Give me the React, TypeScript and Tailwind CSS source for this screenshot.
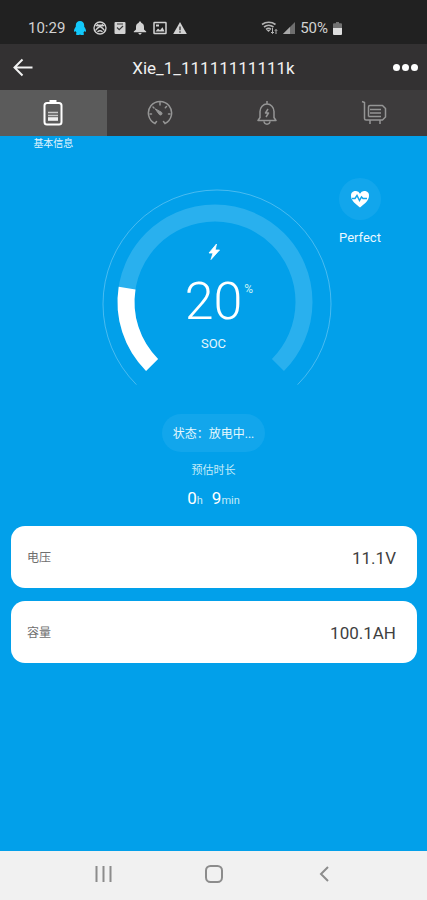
import React from "react";

const FONT = "font-[Roboto,'Noto_Sans_CJK_SC',sans-serif]";

function StatusBar() {
  return (
    <div className="flex h-11 items-end justify-between bg-[#212121] pr-[85px] pb-2 pl-7 text-[#d2d2d2]">
      <div className="flex h-4 items-center gap-[6px]">
        <span className="pr-[2px] text-[15px] leading-4">10:29</span>
        <svg className="h-4 w-[14px]" viewBox="0 0 13 16" fill="#12c8fa">
          <path d="M6.500 1C4 1 2.300 2.800 2.300 5.200v1.600C1.200 8.200.4 9.800.5 11.200c.2 1 1 .6 1.500-.2.2.9.8 1.500 1.400 2-.8.3-1.100.9-.8 1.400.5.7 2.900.7 3.900 0 1 .7 3.400.7 3.900 0 .3-.5 0-1.100-.8-1.400.6-.5 1.200-1.100 1.400-2 .5.8 1.300 1.200 1.500.2.100-1.400-.7-3-1.800-4.400V5.200C10.700 2.800 9 1 6.500 1z" />
        </svg>
        <svg className="size-[14px]" viewBox="0 0 14 14" fill="none" stroke="currentColor" strokeWidth="1.300">
          <circle cx="7" cy="7" r="6" />
          <path d="M2.500 4.500c3 0 7 2 9 5M11.500 4.500c-3 0-7 2-9 5M4 3.500c2 1 4 1 6 0M4.500 11c1.500-1.500 3.500-1.500 5 0" />
        </svg>
        <svg className="size-[14px]" viewBox="0 0 14 14">
          <rect x="1.500" y="1" width="11" height="12" rx="1" fill="currentColor" />
          <path d="M4 6.500l2.200 2.200L10 5M4 3h6" fill="none" stroke="#3a3a3a" strokeWidth="1.200" />
        </svg>
        <svg className="size-[14px]" viewBox="0 0 14 14" fill="currentColor">
          <path d="M7 .5c-.8 0-1.200.5-1.200 1.200C3.900 2.300 3 3.900 3 6v2.500L.8 10.500v.8h12.400v-.8L11 8.500V6c0-2.100-.9-3.700-2.800-4.300C8.200 1 7.800.5 7 .5zM5.400 12.100h3.200c0 .9-.7 1.500-1.600 1.500s-1.600-.6-1.600-1.500z" />
        </svg>
        <svg className="size-[14px]" viewBox="0 0 14 14" fill="none" stroke="currentColor" strokeWidth="1.500">
          <rect x="1" y="1.500" width="12" height="11" rx="0.500" />
          <path d="M2.500 10.500l2.500-3 2 1.800 2.500-3 2 4.200z" fill="currentColor" stroke="none" />
          <rect x="3" y="3.500" width="3" height="2" fill="currentColor" stroke="none" />
        </svg>
        <svg className="size-[14px]" viewBox="0 0 14 14">
          <path d="M7 1l6.800 12H.2z" fill="currentColor" />
          <path d="M7 5.500v3.800M7 10.200v1.500" stroke="#212121" strokeWidth="1.200" />
        </svg>
      </div>
      <div className="flex h-4 items-center gap-[5px]">
        <svg className="h-[14px] w-[17px]" viewBox="0 0 17 14" fill="none" stroke="#b4b4b4" strokeWidth="1.600">
          <path d="M1 3.500c4-3 9.500-3 13.500 0M3 6c3-2.200 6.500-2.200 9.500 0M5 8.300c1.800-1.200 3.500-1.200 5 0" />
          <path d="M5.500 9h4L7.500 11z" fill="#b4b4b4" stroke="none" />
          <path d="M11.500 7v5.500M10 11l1.500 1.500L13 11M15 13V8.500M13.800 9.800L15 8.500l1.200 1.300" strokeWidth="1" />
        </svg>
        <svg className="size-3" viewBox="0 0 12 12">
          <path d="M0 12L12 0v12z" fill="#6f6f6f" />
          <path d="M0 12l7-7v7z" fill="#a9a9a9" />
        </svg>
        <span className="text-[15px] leading-4">50%</span>
        <svg className="h-[13px] w-[9px]" viewBox="0 0 9 13">
          <path d="M3 0h3v1.200h2a1 1 0 0 1 1 1V6H0V2.200a1 1 0 0 1 1-1h2z" fill="#727272" />
          <path d="M0 6h9v6a1 1 0 0 1-1 1H1a1 1 0 0 1-1-1z" fill="#dedede" />
        </svg>
      </div>
    </div>
  );
}

function Header() {
  return (
    <header className="grid h-[46px] grid-cols-[48px_1fr_48px] items-center bg-[#333132] text-white">
      <button type="button" aria-label="返回" className="flex h-full items-center pl-[13px]">
        <svg className="size-5" viewBox="0 0 20 20" fill="none" stroke="#f2f2f2" strokeWidth="2">
          <path d="M19.500 10.500H2M9.500 2.500l-8 8 8 8" />
        </svg>
      </button>
      <h1 className="pt-[2px] text-center text-[17px] leading-5 text-[#f0f0f0]">Xie_1_11111111111k</h1>
      <button type="button" aria-label="更多" className="flex h-full items-center justify-end gap-[2px] pr-[9px]">
        <span className="size-[7px] rounded-full bg-white" />
        <span className="size-[7px] rounded-full bg-white" />
        <span className="size-[7px] rounded-full bg-white" />
      </button>
    </header>
  );
}

function Tabs() {
  const tab = "relative flex items-center justify-center";
  return (
    <nav className="grid h-[46px] grid-cols-4 bg-[#3d3b3c] text-[#959595]">
      <button type="button" aria-current="page" className={`${tab} bg-[#5b5b5b] text-white`}>
        <svg className="h-[26px] w-5" viewBox="0 0 20 26" fill="none" stroke="currentColor" strokeWidth="2">
          <rect x="1.500" y="3" width="17" height="21.500" rx="2.500" />
          <path d="M6.500 1.500h7" strokeWidth="3" />
          <path d="M5 12.500h10M5 15.500h10" stroke="#c9c9c9" strokeWidth="1.600" />
          <path d="M5 19h10" strokeWidth="3.600" stroke="#efefef" />
        </svg>
        <span className="absolute top-full text-[10px] leading-4 whitespace-nowrap text-[#e4f6ff]">基本信息</span>
      </button>
      <button type="button" aria-label="仪表" className={tab}>
        <svg className="size-[26px]" viewBox="0 0 26 26" fill="none" stroke="currentColor" strokeWidth="1.500" strokeLinecap="round">
          <path d="M9.500 21.500l-1.500 2a11.600 11.600 0 1 1 10 0l-1.500-2" />
          <path d="M13 2.500v2.500M3 14h1.500M21.500 14H23M19.500 6.500l-1.200 1.200M6 7l1 1" />
          <path d="M8.500 9l5.500 3a1.600 1.600 0 1 1-2 2.200z" fill="currentColor" strokeWidth="1" />
        </svg>
      </button>
      <button type="button" aria-label="报警" className={tab}>
        <svg className="h-[26px] w-5" viewBox="0 0 20 26" fill="none" stroke="currentColor" strokeWidth="1.500" strokeLinejoin="round">
          <path d="M10 1v3M3 18v-6.500a7 7.500 0 0 1 14 0V18M3 17.500l-2 3h18l-2-3M7 21.500c.5 3.500 5.500 3.500 6 0" />
          <path d="M11 9l-2.500 4h3L9 17" />
        </svg>
      </button>
      <button type="button" aria-label="设备" className={tab}>
        <svg className="size-[26px]" viewBox="0 0 26 26" fill="none" stroke="currentColor" strokeWidth="1.500" strokeLinejoin="round">
          <path d="M1 1.500l2.500 1v16a1.500 1.500 0 0 0 1.500 1.500h16.500l3-3V8.500l-3-3H9A1.500 1.500 0 0 0 7.500 7v9.500" />
          <path d="M9 9.500h11M9 13h11M7.500 16.500H20" />
          <path d="M9 20v2M19 20v2M8 23h2M18 23h2" />
        </svg>
      </button>
    </nav>
  );
}

function Gauge({ value }: { value: number }) {
  const arc = "M58.070 180.930A89 89 0 1 1 183.930 180.930";
  return (
    <div className="relative h-[208px] w-[240px]">
      <svg className="size-full" viewBox="0 0 240 208" fill="none">
        <path d="M42.390 200.610A114 114 0 1 1 203.610 200.610" stroke="#fff" strokeOpacity="0.280" strokeWidth="1" />
        <path d={arc} stroke="#29b0ee" strokeWidth="17" />
        <path d={arc} pathLength={100} strokeDasharray={`${value} 200`} stroke="#fff" strokeWidth="17" />
        <path d="M122.500 60l-7.500 9h4l-2 6.500 8.500-9.500h-4.300z" fill="#fff" stroke="#fff" strokeWidth="0.800" />
      </svg>
      <div className="absolute inset-x-0 top-[88px] flex flex-col items-center text-white">
        <p className="relative text-[52px] leading-[60px] font-light">
          {value}
          <span className="absolute top-[11px] left-full pl-[2px] text-xs leading-3 font-normal text-[#c5f0f5]">%</span>
        </p>
        <p className="pt-1 text-[13px] leading-4 text-[#e2f6fc]">SOC</p>
      </div>
    </div>
  );
}

function HealthBadge() {
  return (
    <div className="absolute top-[42px] right-[27px] flex w-20 flex-col items-center gap-[10px]">
      <div className="flex size-[42px] items-center justify-center rounded-full bg-[#12a6ec]">
        <svg className="h-[18px] w-5" viewBox="0 0 20 18">
          <path d="M10 17.500C7 15 1 11 1 6a4.700 4.700 0 0 1 9-2.200A4.700 4.700 0 0 1 19 6c0 5-6 9-9 11.500z" fill="#fff" />
          <path d="M2 8.500h3l2-3 2.500 5 2-3.500 1.500 1.500h4" fill="none" stroke="#12a6ec" strokeWidth="1.500" />
        </svg>
      </div>
      <p className="text-[13px] leading-4 text-[#eaf8ff]">Perfect</p>
    </div>
  );
}

function Reading({ label, value }: { label: string; value: string }) {
  return (
    <div className="flex h-[62px] items-center justify-between rounded-[14px] bg-white pt-[2px] pr-[21px] pl-4">
      <dt className="text-xs text-[#6e6e6e]">{label}</dt>
      <dd className="text-[17px] leading-5 text-[#3f3f3f]">{value}</dd>
    </div>
  );
}

function SystemNav() {
  return (
    <div className="grid h-[49px] grid-cols-[1fr_14px_1fr] bg-[#f1f1f1] pb-[3px] text-[#8c8c8c]">
      <button type="button" aria-label="最近" className="flex items-center justify-center">
        <svg className="h-4 w-[17px]" viewBox="0 0 17 16" stroke="currentColor" strokeWidth="2">
          <path d="M1.500 0v16M8.500 0v16M15.500 0v16" />
        </svg>
      </button>
      <button type="button" aria-label="主页" className="flex items-center justify-center">
        <svg className="size-[18px] shrink-0" viewBox="0 0 18 18" fill="none" stroke="currentColor" strokeWidth="2">
          <rect x="1" y="1" width="16" height="16" rx="4.500" />
        </svg>
      </button>
      <button type="button" aria-label="后退" className="flex items-center justify-center">
        <svg className="h-4 w-[10px]" viewBox="0 0 10 16" fill="none" stroke="currentColor" strokeWidth="2">
          <path d="M9 1L2 8l7 7" />
        </svg>
      </button>
    </div>
  );
}

export default function App() {
  return (
    <div className={`flex min-h-screen flex-col bg-[#02a0ea] ${FONT}`}>
      <StatusBar />
      <Header />
      <Tabs />
      <main className="relative flex flex-1 flex-col items-center pt-12 text-white">
        <Gauge value={20} />
        <HealthBadge />
        <p className="mt-[22px] flex h-[38px] items-center rounded-full bg-[#12a6ec] px-[11px] pt-[2px] text-xs text-[#e6f8fd]">
          状态：放电中...
        </p>
        <p className="mt-[11px] text-[11px] leading-4 text-[#c4ebf8]">预估时长</p>
        <p className="mt-[9px] flex items-baseline text-[17px] leading-5">
          0<span className="mr-[9px] text-[11px] leading-5 text-[#c4ebf8]">h</span>
          9<span className="text-[11px] leading-5 text-[#c4ebf8]">min</span>
        </p>
        <dl className="mt-[15px] flex w-full flex-col gap-[13px] pr-[10px] pl-[11px]">
          <Reading label="电压" value="11.1V" />
          <Reading label="容量" value="100.1AH" />
        </dl>
      </main>
      <SystemNav />
    </div>
  );
}
